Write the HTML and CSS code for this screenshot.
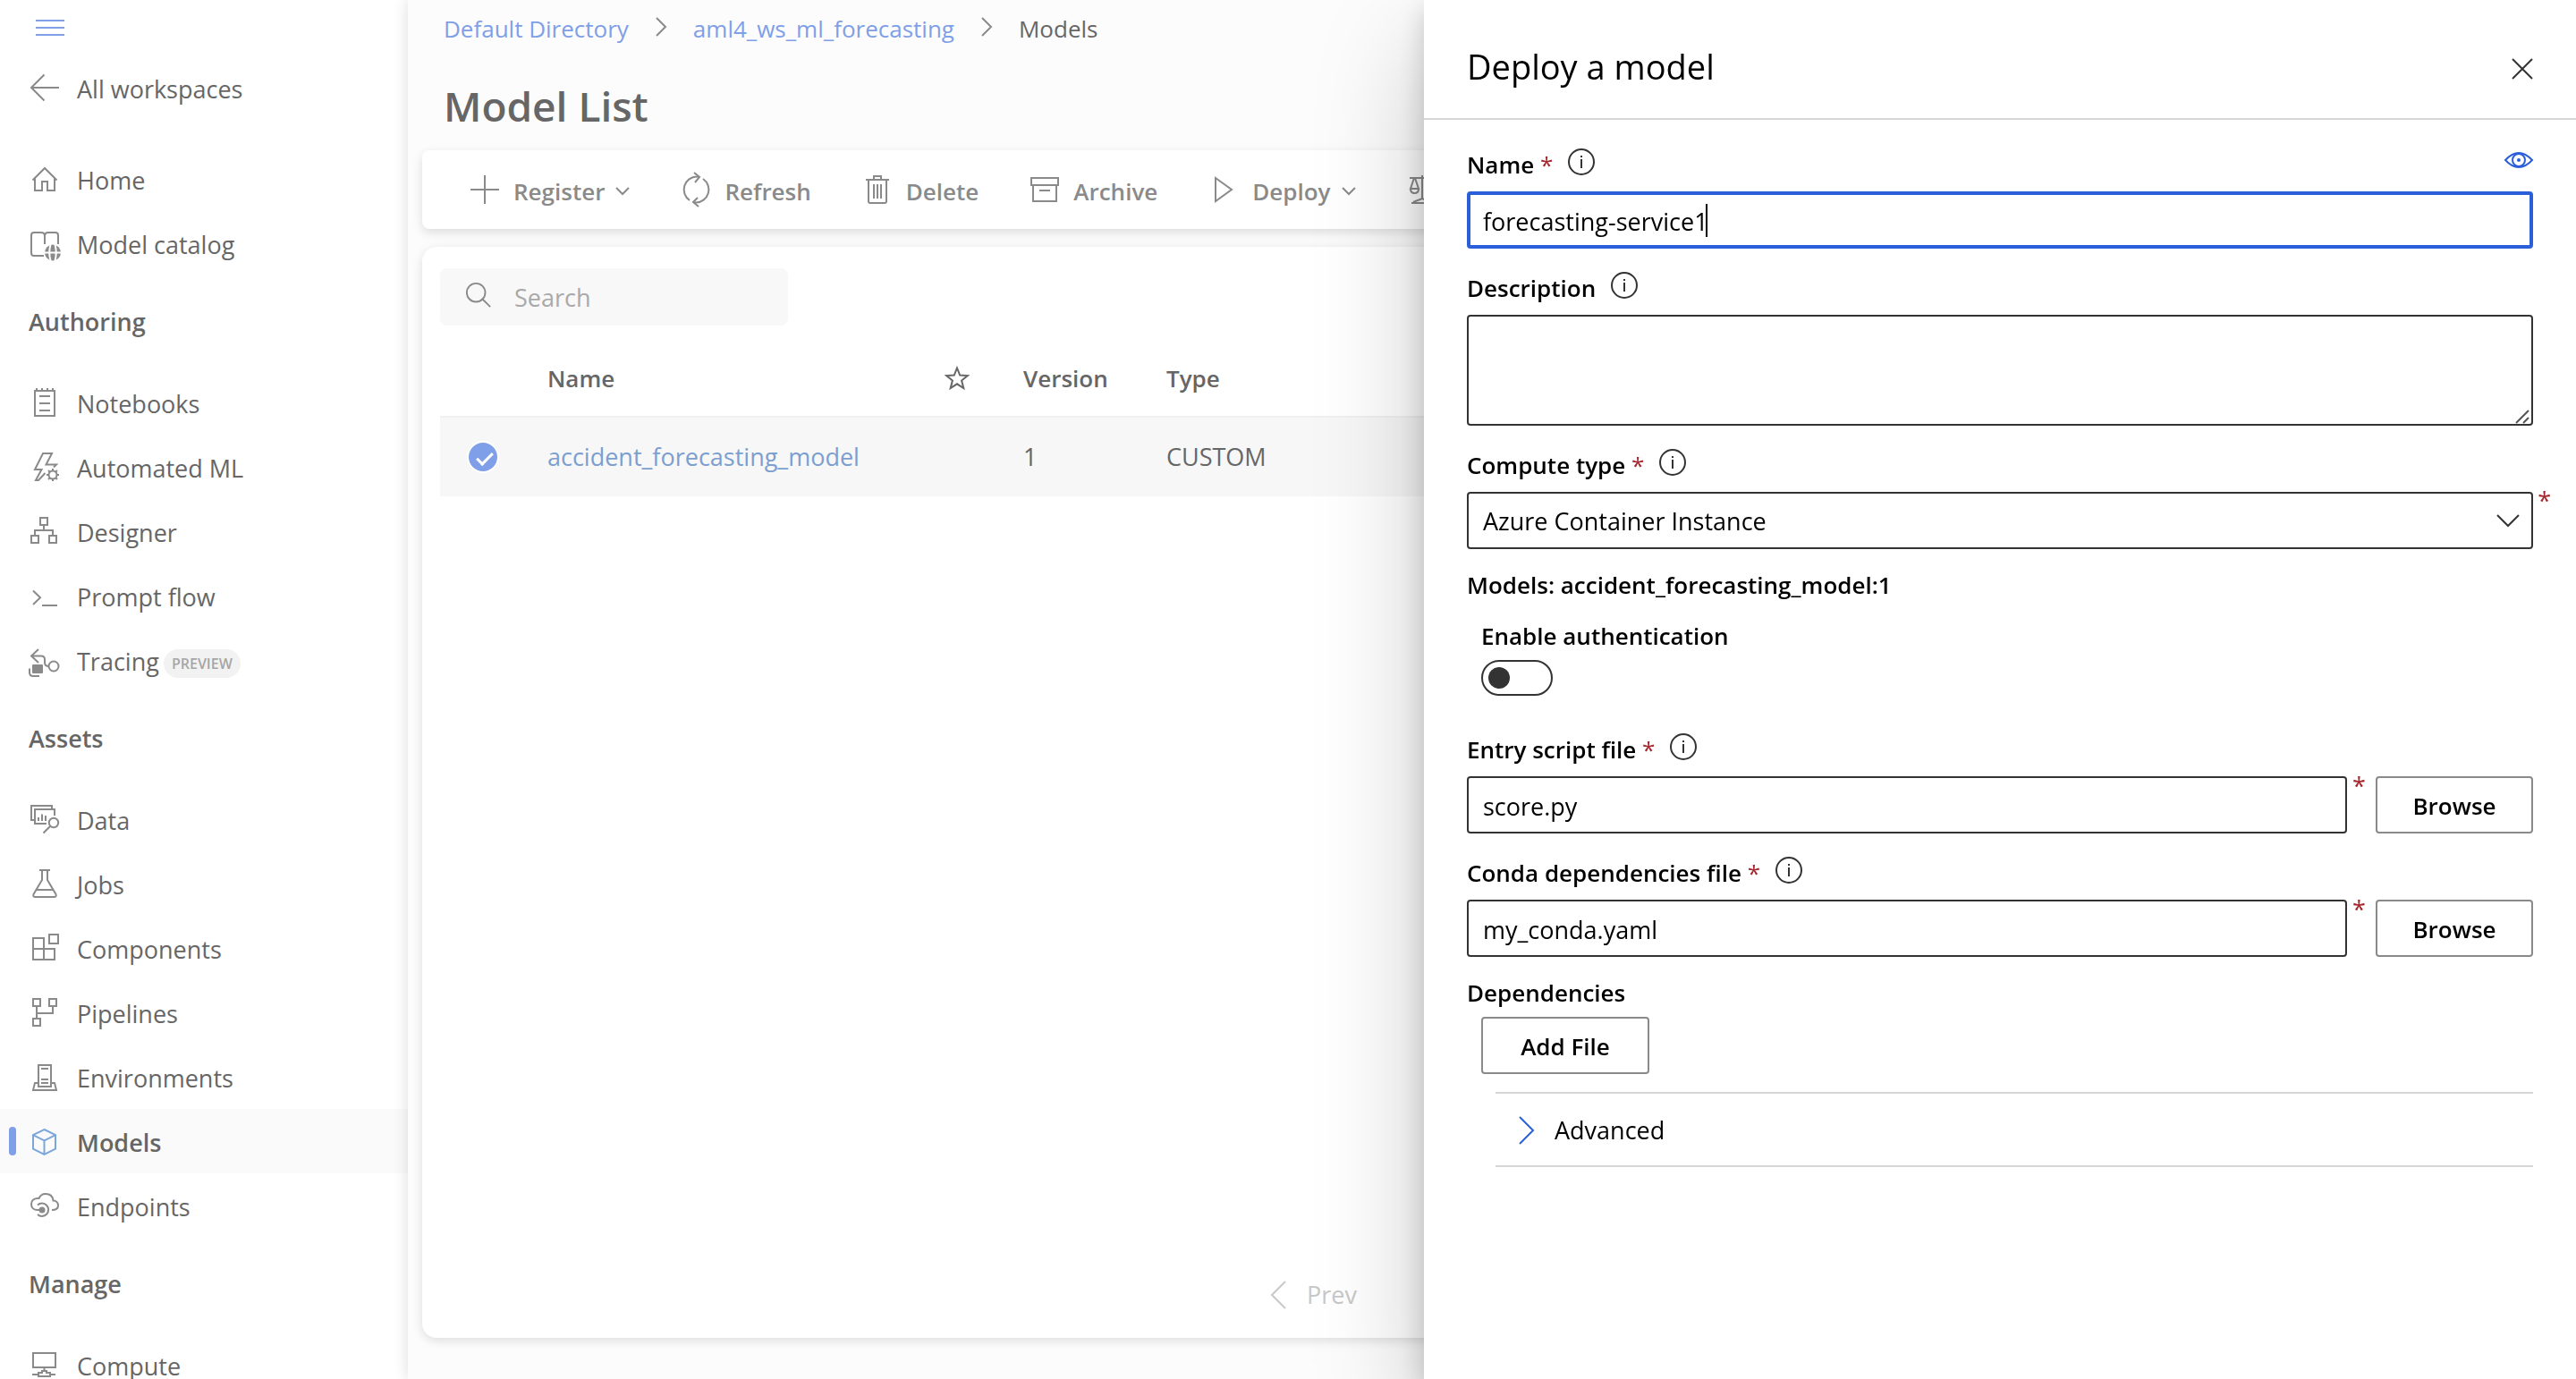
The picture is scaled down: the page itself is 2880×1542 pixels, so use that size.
FILE: index.html
```html
<!DOCTYPE html>
<html lang="en">
<head>
<meta charset="utf-8">
<meta name="viewport" content="width=device-width, initial-scale=1">
<title>Model List</title>
<link rel="stylesheet" href="styles.css">
</head>
<body>
<div class="app">
  <nav class="sidebar" aria-label="Workspace">
    <button class="menu-button" type="button" aria-label="Toggle navigation">
      <svg width="32" height="20" viewBox="0 0 32 20"><path d="M0 2h32M0 10h32M0 18h32"/></svg>
    </button>
    <a class="nav-item nav-back" href="#"><svg class="icon" viewBox="0 0 32 32"><path d="M32 16H1M15.500 1.500 1 16l14.500 14.500"/></svg>All workspaces</a>
    <a class="nav-item" href="#"><svg class="icon" viewBox="0 0 32 32"><path d="M2.500 17.500 16 4l13.500 13.500M5 15v14h8V19h6v10h8V15"/></svg>Home</a>
    <a class="nav-item" href="#"><svg class="icon" viewBox="0 0 32 32"><path d="M15 30H4a3 3 0 0 1-3-3V7a3 3 0 0 1 3-3h8q4 0 4 4v9M16 8q0-4 4-4h8a3 3 0 0 1 3 3v10"/><circle class="fill" cx="25" cy="26.500" r="9"/><path class="cut" d="M16 26.500h18M22.500 17.500q-2.500 9 0 18M27.500 17.500q2.500 9 0 18"/></svg>Model catalog</a>

    <h2 class="nav-heading">Authoring</h2>
    <a class="nav-item" href="#"><svg class="icon" viewBox="0 0 32 32"><path d="M5 3h22v28H5zM7 0v3M13 0v3M19 0v3M25 0v3M10 9h12M10 17h12M10 25h12"/></svg>Notebooks</a>
    <a class="nav-item" href="#"><svg class="icon" viewBox="0 0 32 32"><path d="M26 16.500l3-3H17.500L24 1H14L5 19h7.500L6 31h3l7.500-8"/><circle cx="25" cy="25" r="4.500"/><path d="M25 18v3M25 29v3M18 25h3M29 25h3M20 20l2 2M28 28l2 2M30 20l-2 2M22 28l-2 2"/></svg>Automated ML</a>
    <a class="nav-item" href="#"><svg class="icon" viewBox="0 0 32 32"><path d="M11 1h8v8h-8zM1 21h8v8H1zM21 21h8v8h-8zM15 9v6M5 21v-6h20v6"/></svg>Designer</a>
    <a class="nav-item" href="#"><svg class="icon" viewBox="0 0 32 32"><path d="M3 10.500l8 7.800L3 26M13 27h17"/></svg>Prompt flow</a>
    <a class="nav-item" href="#"><svg class="icon" viewBox="0 0 32 32"><path d="M9 4 1 11.500 9 19M1 11.500h11q4 0 4 4v3.500q0 4 4.500 4M-1 25.500V30q0 4 4 4h7"/><circle cx="26" cy="23" r="5.500"/><rect class="fill" x="2" y="21" width="12" height="10" rx="1"/></svg>Tracing <span class="badge">PREVIEW</span></a>

    <h2 class="nav-heading">Assets</h2>
    <a class="nav-item" href="#"><svg class="icon" viewBox="0 0 32 32"><path d="M24 5V1H1v16h4M18 21H5V5h22v7M9 14v4M13 10.500V18M17 12v6M22 24l-7.500 7.500"/><circle cx="26" cy="20" r="5.200"/></svg>Data</a>
    <a class="nav-item" href="#"><svg class="icon" viewBox="0 0 32 32"><path d="M10 1h12M13 1v11L3.500 28q-1 3 2 3h21q3 0 2-3L19 12V1M7 23h18"/></svg>Jobs</a>
    <a class="nav-item" href="#"><svg class="icon" viewBox="0 0 32 32"><path d="M21 1h10v10H21zM3 5h12v12h12v12H3zM3 17h12v12"/></svg>Components</a>
    <a class="nav-item" href="#"><svg class="icon" viewBox="0 0 32 32"><path d="M3 1h8v8H3zM21 1h8v8h-8zM3 23h8v8H3zM7 9v14M7 17h18V9"/></svg>Pipelines</a>
    <a class="nav-item" href="#"><svg class="icon" viewBox="0 0 32 32"><path d="M9 3h14v24H9zM12 7h8M12 19h8M12 23h8M9 23H5l-2 8h26l-2-8h-4"/></svg>Environments</a>
    <a class="nav-item nav-item-current" href="#" aria-current="page"><svg class="icon" viewBox="0 0 32 32"><path d="M15.500 3 28 9.200v15.500L15.500 31 3 24.700V9.200zM3 9.200l12.500 6.200L28 9.200M15.500 15.400V31"/></svg>Models</a>
    <a class="nav-item" href="#"><svg class="icon" viewBox="0 0 32 32"><path d="M13 21H8c-4 0-7-2.500-7-6.500S4 7.500 9.500 8C11 4.500 14 3 17 3c5 0 8 3 8.500 7.500 3.500 0 5.500 2.500 5.500 5.500s-2 5-7 5M8 15.500a7.200 7.200 0 1 1 0 10.500"/><circle class="fill" cx="13" cy="21" r="3.500"/></svg>Endpoints</a>

    <h2 class="nav-heading">Manage</h2>
    <a class="nav-item" href="#"><svg class="icon" viewBox="0 0 32 32"><path d="M3 3h25v16H3zM15.500 19v4M2 27h7M22 27h6M9 25h4v-2h5v2h4v4H9z"/></svg>Compute</a>
  </nav>

  <main class="main">
    <nav class="breadcrumb" aria-label="Breadcrumb">
      <a href="#">Default Directory</a>
      <svg class="crumb-chevron" viewBox="0 0 12 20"><path d="M1 0l10 10L1 20"/></svg>
      <a href="#">aml4_ws_ml_forecasting</a>
      <svg class="crumb-chevron" viewBox="0 0 12 20"><path d="M1 0l10 10L1 20"/></svg>
      <span>Models</span>
    </nav>
    <h1 class="page-title">Model List</h1>

    <div class="toolbar" role="toolbar" aria-label="Model actions">
      <button class="tool" type="button"><svg class="icon" viewBox="0 0 32 32"><path d="M16 0v32M0 16h32"/></svg>Register<svg class="caret-down" viewBox="0 0 16 10"><path d="M1 1l7 7 7-7"/></svg></button>
      <button class="tool" type="button"><svg class="icon" viewBox="0 0 32 32"><path d="M9 28A14.500 14.500 0 0 1 17 1.500h3M14-3l6 5-5 6M24 4A14.500 14.500 0 0 1 16 30.500h-3M19 35l-6-5 5-5"/></svg>Refresh</button>
      <button class="tool" type="button"><svg class="icon" viewBox="0 0 32 32"><path d="M3 5h26M12 5V1h8v4M6 5v24q0 2 2 2h16q2 0 2-2V5M12 10v16M16 10v16M20 10v16"/></svg>Delete</button>
      <button class="tool" type="button"><svg class="icon" viewBox="0 0 32 32"><path d="M1 3h30v8H1zM3 11v18h26V11M10 17h12"/></svg>Archive</button>
      <button class="tool" type="button"><svg class="icon" viewBox="0 0 32 32"><path d="M7 3l18 13L7 29z"/></svg>Deploy<svg class="caret-down" viewBox="0 0 16 10"><path d="M1 1l7 7 7-7"/></svg></button>
      <button class="tool" type="button" aria-label="Fairness"><svg class="icon" viewBox="0 0 32 32"><path d="M2 3h28M16 0v26M7 3 3 15h9L8 3M3 15q0 5 4.500 5t4.500-5M25 3l-5 12h9L26 3M20 15q0 5 4.500 5t4.500-5M4 31h24M6 30l10-4 10 4"/></svg></button>
    </div>

    <section class="card" aria-label="Models">
      <label class="search">
        <svg class="icon" viewBox="0 0 32 32"><circle cx="13" cy="13" r="11"/><path d="M20 20l10 10"/></svg>
        <input type="search" placeholder="Search" aria-label="Search">
      </label>
      <table class="models">
        <colgroup><col class="col-check"><col class="col-name"><col class="col-star"><col class="col-version"><col></colgroup>
        <thead>
          <tr>
            <td></td>
            <th scope="col">Name</th>
            <td><svg class="star" viewBox="0 0 28 28"><path d="M14 2.500l3.200 8.100 8.600.5-6.700 5.500 2.200 8.400-7.300-4.700-7.300 4.700 2.200-8.400L2.200 11.100l8.600-.5z"/></svg></td>
            <th scope="col">Version</th>
            <th scope="col">Type</th>
          </tr>
        </thead>
        <tbody>
          <tr>
            <td class="cell-check"><input class="round-check" type="checkbox" checked aria-label="Select accident_forecasting_model"></td>
            <td><a href="#">accident_forecasting_model</a></td>
            <td></td>
            <td>1</td>
            <td>CUSTOM</td>
          </tr>
        </tbody>
      </table>
      <div class="pager">
        <button class="pager-button" type="button" disabled><svg viewBox="0 0 18 32"><path d="M17 1 2 16l15 15"/></svg>Prev</button>
      </div>
    </section>
  </main>
</div>

<aside class="panel" role="dialog" aria-labelledby="panel-title">
  <header class="panel-header">
    <h2 id="panel-title">Deploy a model</h2>
    <button class="close" type="button" aria-label="Close"><svg viewBox="0 0 24 24"><path d="M1 1l22 22M23 1 1 23"/></svg></button>
  </header>
  <form class="form">
    <div class="field">
      <div class="label-row">
        <label for="name">Name <span class="required">*</span></label>
        <svg class="info" viewBox="0 0 30 30"><circle cx="15" cy="15" r="14"/><path d="M15 12v10M15 8v2"/></svg>
        <button class="preview" type="button" aria-label="Show preview"><svg viewBox="0 0 32 18"><path d="M1 9q15-16 30 0-15 16-30 0z"/><circle cx="16" cy="9" r="7"/><circle class="pupil" cx="16" cy="9" r="2"/></svg></button>
      </div>
      <div class="control">
        <input class="input input-active" id="name" type="text" value="forecasting-service1">
        <span class="text-caret"></span>
      </div>
    </div>
    <div class="field">
      <div class="label-row">
        <label for="description">Description</label>
        <svg class="info" viewBox="0 0 30 30"><circle cx="15" cy="15" r="14"/><path d="M15 12v10M15 8v2"/></svg>
      </div>
      <div class="control">
        <textarea class="input textarea" id="description"></textarea>
        <svg class="grip" viewBox="0 0 16 16"><path d="M1 15 15 1M9 15l6-6"/></svg>
      </div>
    </div>
    <div class="field">
      <div class="label-row">
        <label for="compute">Compute type <span class="required">*</span></label>
        <svg class="info" viewBox="0 0 30 30"><circle cx="15" cy="15" r="14"/><path d="M15 12v10M15 8v2"/></svg>
      </div>
      <div class="control">
        <select class="input" id="compute"><option>Azure Container Instance</option></select>
        <svg class="select-chevron" viewBox="0 0 26 14"><path d="M1 1l12 12L25 1"/></svg>
        <span class="required required-out">*</span>
      </div>
    </div>
    <p class="models-line">Models: accident_forecasting_model:1</p>
    <div class="nested">
      <label for="auth">Enable authentication</label>
      <input class="toggle" id="auth" type="checkbox" role="switch">
    </div>
    <div class="field field-after-toggle">
      <div class="label-row">
        <label for="script">Entry script file <span class="required">*</span></label>
        <svg class="info" viewBox="0 0 30 30"><circle cx="15" cy="15" r="14"/><path d="M15 12v10M15 8v2"/></svg>
      </div>
      <div class="file-row">
        <input class="input" id="script" type="text" value="score.py">
        <span class="required file-required">*</span>
        <button class="button" type="button">Browse</button>
      </div>
    </div>
    <div class="field">
      <div class="label-row">
        <label for="conda">Conda dependencies file <span class="required">*</span></label>
        <svg class="info" viewBox="0 0 30 30"><circle cx="15" cy="15" r="14"/><path d="M15 12v10M15 8v2"/></svg>
      </div>
      <div class="file-row">
        <input class="input" id="conda" type="text" value="my_conda.yaml">
        <span class="required file-required">*</span>
        <button class="button" type="button">Browse</button>
      </div>
    </div>
    <p class="models-line">Dependencies</p>
    <div class="add-file"><button class="button" type="button">Add File</button></div>
    <button class="advanced" type="button" aria-expanded="false"><svg viewBox="0 0 18 32"><path d="M1 1l15 15L1 31"/></svg>Advanced</button>
  </form>
</aside>
</body>
</html>
```
FILE: styles.css
```css
* {
  box-sizing: border-box;
}

body {
  margin: 0;
  height: 100vh;
  overflow: hidden;
  background: #fcfcfc;
  color: #666;
  font: 27px/40px "Open Sans", "Noto Sans", sans-serif;
}

h1, h2, p {
  margin: 0;
}

a {
  color: inherit;
  text-decoration: none;
}

button, input, select, textarea {
  margin: 0;
  font: inherit;
  color: inherit;
}

button {
  padding: 0;
  border: 0;
  background: none;
}

svg {
  flex: none;
  overflow: visible;
  fill: none;
  stroke: currentColor;
  stroke-width: 2;
}

.app {
  display: flex;
  height: 100%;
}

.icon {
  width: 32px;
  height: 32px;
  color: #8a8a8a;
}

.icon .fill {
  fill: currentColor;
  stroke: none;
}

.icon .cut {
  stroke: #fff;
}

/* Sidebar */
.sidebar {
  flex: none;
  width: 456px;
  overflow: hidden;
  background: #fff;
}

.menu-button {
  display: flex;
  align-items: center;
  height: 62px;
  padding: 0 40px;
  color: #7f9fe8;
}

.nav-item {
  display: flex;
  align-items: center;
  gap: 20px;
  height: 72px;
  padding: 4px 0 0 34px;
}

.nav-item .icon,
.tool .icon {
  margin-bottom: 4px;
}

.nav-back {
  margin-bottom: 30px;
}

.nav-heading {
  padding: 16px 32px 18px;
  font-size: 27px;
  font-weight: 600;
  line-height: 72px;
}

.nav-item-current {
  position: relative;
  background: #fafafa;
  font-weight: 600;
}

.nav-item-current .icon {
  color: #7ba6dc;
}

.nav-item-current::before {
  content: "";
  position: absolute;
  left: 10px;
  top: 20px;
  width: 8px;
  height: 32px;
  border-radius: 4px;
  background: #7f9fe8;
}

.badge {
  margin: 4px 0 0 -15px;
  padding: 0 9px;
  border-radius: 16px;
  background: #f2f2f2;
  color: #a6a6a6;
  font-size: 16px;
  font-weight: 600;
  line-height: 32px;
}

/* Main column */
.main {
  position: relative;
  display: flex;
  flex: 1;
  flex-direction: column;
  min-width: 0;
  padding: 12px 16px 46px;
  background: #fcfcfc;
  box-shadow: 0 0 16px rgba(0, 0, 0, 0.14);
}

.breadcrumb {
  display: flex;
  align-items: center;
  gap: 30px;
  padding-left: 24px;
  font-size: 26px;
}

.breadcrumb a {
  color: #7f9fe8;
}

.crumb-chevron {
  width: 12px;
  height: 20px;
  margin-bottom: 4px;
  color: #8a8a8a;
}

.page-title {
  padding: 34px 24px 18px;
  font-size: 46px;
  font-weight: 600;
  line-height: 64px;
}

.toolbar {
  display: flex;
  flex: none;
  align-items: center;
  gap: 58px;
  height: 88px;
  padding: 4px 0 0 54px;
  border-radius: 8px;
  background: #fff;
  box-shadow: 0 4px 12px rgba(0, 0, 0, 0.13);
  color: #8a8a8a;
}

.tool {
  display: flex;
  align-items: center;
  gap: 16px;
  font-size: 26px;
  font-weight: 600;
}

.caret-down {
  width: 16px;
  height: 10px;
  margin-left: -4px;
}

.card {
  display: flex;
  flex: 1;
  flex-direction: column;
  margin-top: 20px;
  padding: 24px 20px 28px;
  border-radius: 16px;
  background: #fff;
  box-shadow: 0 3px 12px rgba(0, 0, 0, 0.13);
}

.search {
  display: flex;
  align-items: center;
  gap: 25px;
  width: 389px;
  height: 64px;
  padding: 2px 0 0 28px;
  border-radius: 8px;
  background: #f8f8f8;
}

.search .icon {
  width: 30px;
  height: 30px;
  margin-bottom: 6px;
}

.search input {
  width: 280px;
  padding: 0;
  border: 0;
  outline: 0;
  background: none;
}

.search input::placeholder {
  color: #a9a9a9;
}

.models {
  width: 100%;
  margin-top: 16px;
  border-collapse: collapse;
  table-layout: fixed;
  text-align: left;
}

.models th,
.models td {
  height: 86px;
  padding: 0;
}

.models tbody td {
  height: 89px;
}

.models th {
  font-size: 26px;
  font-weight: 600;
}

.col-check { width: 120px; }
.col-name { width: 444px; }
.col-star { width: 88px; }
.col-version { width: 160px; }

.models tbody tr {
  border-top: 2px solid #f0f0f0;
  background: #f7f7f7;
}

.models a {
  color: #7b9fd0;
}

.star {
  display: block;
  width: 28px;
  height: 28px;
}

.models .cell-check {
  padding-left: 32px;
}

.round-check {
  display: block;
  appearance: none;
  width: 32px;
  height: 32px;
  border-radius: 50%;
  background: #7f9fe8;
  box-shadow: 0 0 0 2px #fff;
}

.round-check::before {
  content: "";
  display: block;
  width: 15px;
  height: 7px;
  margin: 11px 9px;
  border: solid #fff;
  border-width: 0 0 3px 3px;
  transform: rotate(-45deg);
}

.pager {
  margin-top: auto;
  padding-left: 928px;
}

.pager-button {
  display: flex;
  align-items: center;
  gap: 23px;
  color: #c8c8c8;
}

.pager-button svg {
  width: 18px;
  height: 32px;
}

/* Deploy panel */
.panel {
  position: fixed;
  top: 0;
  right: 0;
  bottom: 0;
  width: 1288px;
  max-width: 100%;
  background: #fff;
  box-shadow: 0 51px 115px rgba(0, 0, 0, 0.22), 0 10px 29px rgba(0, 0, 0, 0.18);
  color: #000;
}

.panel-header {
  display: flex;
  align-items: center;
  justify-content: space-between;
  padding: 47px 48px 31px;
  border-bottom: 2px solid #d6d6d6;
}

.panel-header h2 {
  font-size: 38px;
  font-weight: 400;
  line-height: 54px;
}

.close {
  display: flex;
  padding: 18px 0 12px;
  color: #333;
}

.close svg {
  width: 24px;
  height: 24px;
}

.form {
  padding: 6px 48px;
}

.field {
  margin-top: 24px;
}

.label-row {
  display: flex;
  gap: 17px;
  margin-bottom: 10px;
  font-size: 26px;
  font-weight: 600;
}

.required {
  color: #a4262c;
  font-weight: 400;
}

.info {
  width: 30px;
  height: 30px;
  margin-top: 2px;
  color: #333;
}

.preview {
  display: flex;
  margin: 6px 0 0 auto;
  color: #2b5fd9;
}

.preview svg {
  width: 32px;
  height: 18px;
}

.preview .pupil {
  fill: currentColor;
  stroke: none;
}

.control {
  position: relative;
}

.input {
  display: block;
  width: 100%;
  height: 64px;
  padding: 2px 16px 0;
  border: 2px solid #333;
  border-radius: 4px;
  outline: 0;
  background: #fff;
}

.input-active {
  padding: 2px 14px 0;
  border: 4px solid #2b5fd9;
}

.text-caret {
  position: absolute;
  left: 267px;
  top: 14px;
  width: 2px;
  height: 37px;
  background: #000;
}

.textarea {
  height: 124px;
  resize: none;
}

.grip {
  position: absolute;
  right: 4px;
  bottom: 2px;
  width: 16px;
  height: 16px;
  color: #555;
}

select.input {
  appearance: none;
}

.select-chevron {
  position: absolute;
  right: 15px;
  top: 25px;
  width: 26px;
  height: 14px;
  color: #333;
}

.required-out {
  position: absolute;
  right: -20px;
  top: -10px;
}

.models-line {
  margin-top: 20px;
  font-size: 26px;
  font-weight: 600;
}

.nested {
  display: grid;
  gap: 7px;
  margin: 17px 0 0 16px;
  font-size: 26px;
  font-weight: 600;
}

.toggle {
  appearance: none;
  width: 80px;
  height: 40px;
  padding: 6px;
  border: 2px solid #333;
  border-radius: 20px;
}

.toggle::before {
  content: "";
  display: block;
  width: 24px;
  height: 24px;
  border-radius: 50%;
  background: #333;
}

.field-after-toggle {
  margin-top: 40px;
}

.file-row {
  display: flex;
}

.file-row .input {
  flex: 1;
  min-width: 0;
}

.file-required {
  width: 32px;
  margin-top: -9px;
  padding-left: 6px;
}

.button {
  width: 176px;
  height: 64px;
  padding-top: 2px;
  border: 2px solid #8a8a8a;
  border-radius: 4px;
  font-size: 26px;
  font-weight: 600;
}

.add-file {
  margin: 7px 0 20px 16px;
}

.add-file .button {
  display: block;
  width: 188px;
}

.advanced {
  display: flex;
  align-items: center;
  gap: 22px;
  width: calc(100% - 32px);
  height: 84px;
  margin-left: 32px;
  padding: 2px 0 0 26px;
  border: solid #d6d6d6;
  border-width: 2px 0;
}

.advanced svg {
  width: 18px;
  height: 32px;
  color: #2b5fd9;
}
```
